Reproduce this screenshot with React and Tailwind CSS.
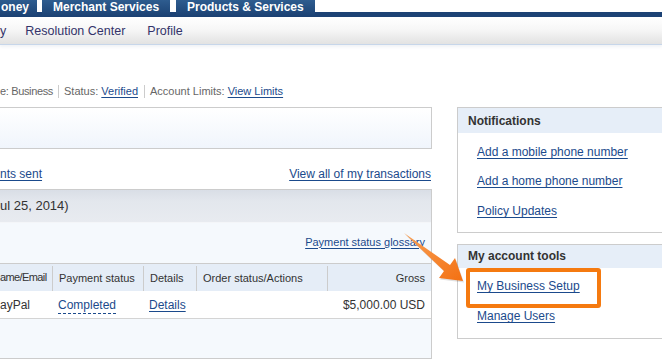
import React from 'react';

const tabCls =
  "h-[17px] bg-[linear-gradient(180deg,#2e5c8f_0%,#234d7f_55%,#1b4072_100%)] text-white font-bold text-[12px] leading-[15px] whitespace-nowrap";

function Gap({ w }) {
  return (
    <div className={`${w} flex flex-col`}>
      <div className="h-[12px] bg-white" />
      <div className="h-[5px] bg-[#1c4275]" />
    </div>
  );
}

function Link({ children, className = "" }) {
  return <a className={`text-[#1b4a8c] underline underline-offset-[2px] ${className}`}>{children}</a>;
}

export default function App() {
  return (
    <div className="relative w-[662px] h-[360px] overflow-hidden bg-white font-['Liberation_Sans',Arial,sans-serif] text-[#333]">
      {/* top tabs */}
      <div className="flex h-[17px]">
        <div className={`${tabCls} w-[37px] pl-[1px]`}>oney</div>
        <Gap w="w-[5px]" />
        <div className={`${tabCls} w-[128px] pl-[11px]`}>Merchant Services</div>
        <Gap w="w-[6px]" />
        <div className={`${tabCls} w-[139px] pl-[11px]`}>Products &amp; Services</div>
        <Gap w="flex-1" />
      </div>

      {/* sub nav */}
      <div className="h-[28px] flex items-center bg-[linear-gradient(180deg,#ffffff_0%,#f7f7f7_45%,#e2e2e2_100%)] border-b border-[#c7d6ea] shadow-[0_2px_3px_rgba(120,140,170,0.12)] text-[12.5px] text-[#33336a] pt-[1px]">
        <span>y</span>
        <span className="ml-[19px]">Resolution Center</span>
        <span className="ml-[22px]">Profile</span>
      </div>

      {/* account line */}
      <div className="mt-[39px] h-[14px] flex items-center text-[11px] text-[#666] leading-[14px]">
        <span className="tracking-[-0.35px]">e: Business</span>
        <span className="mx-[5px] h-[13px] border-l border-[#ccc]" />
        <span>Status:&nbsp;</span>
        <Link>Verified</Link>
        <span className="ml-[6px] mr-[5px] h-[13px] border-l border-[#ccc]" />
        <span>Account Limits:&nbsp;</span>
        <Link>View Limits</Link>
      </div>

      <div className="mt-[9px] flex gap-[25px]">
        {/* left column */}
        <div className="w-[432px] shrink-0">
          <div className="h-[42px] border border-l-0 border-[#ccc] bg-[linear-gradient(180deg,#ffffff_0%,#f0f5fc_100%)]" />

          <div className="mt-[18px] h-[14px] flex justify-between items-center text-[12px] pr-[1px]">
            <Link>nts sent</Link>
            <Link>View all of my transactions</Link>
          </div>

          <div className="mt-[8px] h-[170px] border border-l-0 border-[#ccc] bg-[#f5f9fd]">
            <div className="h-[33px] flex items-center text-[13px] text-[#333] bg-[linear-gradient(180deg,#d9dee6_0%,#e3e7ed_35%,#e8ebf0_100%)] border-b border-[#f4f6f9] pb-[1px]">
              ul 25, 2014)
            </div>
            <div className="h-[40px] flex items-center justify-end pr-[6px] text-[11px] pb-[2px]">
              <Link>Payment status glossary</Link>
            </div>
            <div className="border-t border-[#ccc] grid grid-cols-[52px_91px_53px_131px_1fr] h-[28px] bg-[#e5edf7] text-[11px] text-[#333] items-stretch">
              <div className="flex items-center whitespace-nowrap tracking-[-0.6px]">ame/Email</div>
              <div className="flex items-center pl-[6px] border-l border-[#ccc] mt-[2px]">Payment status</div>
              <div className="flex items-center pl-[6px] border-l border-[#ccc] mt-[2px]">Details</div>
              <div className="flex items-center pl-[6px] border-l border-[#ccc] mt-[2px]">Order status/Actions</div>
              <div className="flex items-center justify-end pr-[6px] border-l border-[#ccc] mt-[2px]">Gross</div>
            </div>
            <div className="grid grid-cols-[52px_91px_53px_131px_1fr] h-[28px] bg-white border-b border-[#d4d4d4] text-[12px] text-[#333] items-center">
              <div className="whitespace-nowrap">ayPal</div>
              <div className="pl-[6px]">
                <a className="text-[#1b4a8c] border-b border-dashed border-[#1b4a8c] pb-[1px]">Completed</a>
              </div>
              <div className="pl-[6px]">
                <Link>Details</Link>
              </div>
              <div />
              <div className="text-right pr-[6px]">$5,000.00 USD</div>
            </div>
          </div>
        </div>

        {/* right column */}
        <div className="flex-1 -mr-[4px]">
          <div className="h-[126px] border border-[#ccc] border-r-0">
            <div className="h-[25px] bg-[#e6eef8] pl-[10px] flex items-center font-bold text-[12px] text-[#333]">
              Notifications
            </div>
            <div className="pl-[19px] text-[12px] flex flex-col">
              <div className="h-[29px] flex items-end pb-[1px]"><Link>Add a mobile phone number</Link></div>
              <div className="h-[29px] flex items-end pb-[1px]"><Link>Add a home phone number</Link></div>
              <div className="h-[30px] flex items-end pb-[1px]"><Link>Policy Updates</Link></div>
            </div>
          </div>

          <div className="relative mt-[11px] h-[95px] border border-[#ccc] border-r-0">
            <div className="h-[23px] bg-[#e6eef8] pl-[10px] flex items-center font-bold text-[12px] text-[#333] pb-[1px]">
              My account tools
            </div>
            <div className="pl-[19px] text-[12px] flex flex-col">
              <div className="h-[28px] flex items-end pb-[1px]"><Link>My Business Setup</Link></div>
              <div className="h-[30px] flex items-end pb-[1px]"><Link>Manage Users</Link></div>
            </div>
            <span className="absolute left-[8px] top-[23px] w-[135px] h-[40px] border-[4px] border-[#f57a10] rounded-[3px]" />
          </div>
        </div>
      </div>

      {/* annotation arrow */}
      <svg className="absolute left-[398px] top-[228px] pointer-events-none" width="72" height="60" viewBox="0 0 72 60">
        <defs>
          <linearGradient id="ar" x1="0" y1="0" x2="1" y2="1">
            <stop offset="0" stopColor="#f9a055" />
            <stop offset="1" stopColor="#f37012" />
          </linearGradient>
        </defs>
        <path d="M6 5 L52 37 L57 30 L65 53 L41 50 L46 43 Z" fill="rgba(0,0,0,0.12)" transform="translate(1 1.5)" />
        <path d="M6 5 L52 37 L57 30 L65 53 L41 50 L46 43 Z" fill="url(#ar)" />
      </svg>
    </div>
  );
}
